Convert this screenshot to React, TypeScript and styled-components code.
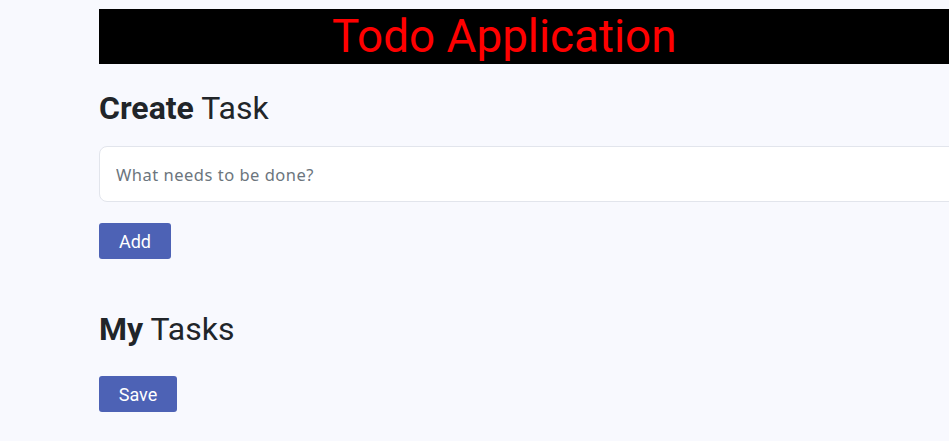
import React from "react";
import styled, { createGlobalStyle } from "styled-components";

const GlobalStyle = createGlobalStyle`
  html, body {
    margin: 0;
    padding: 0;
    background: #f8f9fe;
    overflow: hidden;
  }
  body {
    font-family: Roboto, "Liberation Sans", sans-serif;
    color: #212529;
  }
`;

const Page = styled.div`
  padding: 9px 0 0 99px;
  width: 1000px;
`;

const Header = styled.header`
  background: #000;
  height: 55px;
  display: flex;
  align-items: center;
  padding-left: 233px;
`;

const Title = styled.h1`
  margin: 0;
  font-family: Roboto, "Liberation Sans", sans-serif;
  font-weight: 400;
  font-size: 45.8px;
  line-height: 55px;
  color: #ff0000;
`;

const Section = styled.section<{ $top: number }>`
  margin-top: ${(p) => p.$top}px;
  display: flex;
  flex-direction: column;
  align-items: flex-start;
`;

const Heading = styled.h2`
  margin: 0;
  font-size: 32px;
  line-height: 38px;
  font-weight: 400;
  color: #212529;
  b {
    font-weight: 700;
  }
`;

const Input = styled.input`
  box-sizing: border-box;
  width: 100%;
  height: 56px;
  margin-top: 19px;
  padding: 0 16px;
  border: 1px solid #e2e5ec;
  border-radius: 8px;
  background: #fff;
  font-family: "Noto Sans", "Open Sans", sans-serif;
  font-size: 16.5px;
  letter-spacing: 0.5px;
  color: #212529;
  outline: none;
  &::placeholder {
    color: #6c757d;
  }
`;

const Button = styled.button<{ $w: number; $top: number }>`
  margin-top: ${(p) => p.$top}px;
  width: ${(p) => p.$w}px;
  height: 36px;
  border: none;
  border-radius: 3px;
  background: #4d62b5;
  color: #fff;
  font-family: Roboto, "Liberation Sans", sans-serif;
  font-size: 18px;
  padding: 0;
  cursor: pointer;
`;

export default function App() {
  return (
    <>
      <GlobalStyle />
      <Page>
        <Header>
          <Title>Todo Application</Title>
        </Header>
        <Section $top={25}>
          <Heading>
            <b>Create</b> Task
          </Heading>
          <Input placeholder="What needs to be done?" />
          <Button $w={72} $top={21}>Add</Button>
        </Section>
        <Section $top={51}>
          <Heading>
            <b>My</b> Tasks
          </Heading>
          <Button $w={78} $top={28}>Save</Button>
        </Section>
      </Page>
    </>
  );
}
